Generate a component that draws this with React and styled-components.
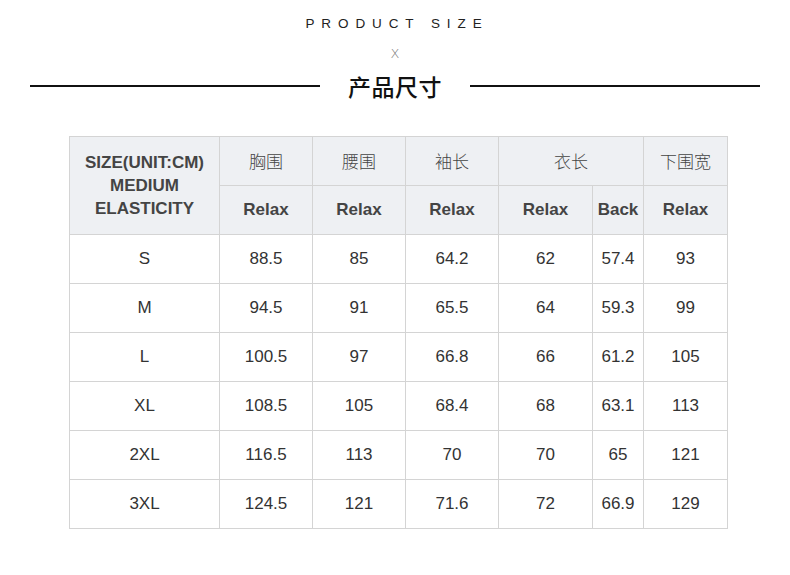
import React from 'react';
import styled, { createGlobalStyle } from 'styled-components';

const GlobalStyle = createGlobalStyle`
  html, body {
    margin: 0;
    padding: 0;
    background: #ffffff;
  }
  body {
    font-family: 'Liberation Sans', Arial, sans-serif;
  }
`;

const rows = [
  ['S', '88.5', '85', '64.2', '62', '57.4', '93'],
  ['M', '94.5', '91', '65.5', '64', '59.3', '99'],
  ['L', '100.5', '97', '66.8', '66', '61.2', '105'],
  ['XL', '108.5', '105', '68.4', '68', '63.1', '113'],
  ['2XL', '116.5', '113', '70', '70', '65', '121'],
  ['3XL', '124.5', '121', '71.6', '72', '66.9', '129'],
];

const colWidths = [150, 93, 93, 93, 94, 51, 84];

const App = () => {
  return (
    <Page>
      <GlobalStyle />
      <Heading>
        <EnTitle>PRODUCT SIZE</EnTitle>
        <Cross>X</Cross>
        <TitleRow>
          <Rule />
          <CnTitle>产品尺寸</CnTitle>
          <Rule />
        </TitleRow>
      </Heading>

      <Table>
        <colgroup>
          {colWidths.map((w, i) => (
            <col key={i} style={{ width: w }} />
          ))}
        </colgroup>
        <thead>
          <tr>
            <HeadCell rowSpan={2} $bold $tall>
              SIZE(UNIT:CM)
              <br />
              MEDIUM
              <br />
              ELASTICITY
            </HeadCell>
            <HeadCell $cn>胸围</HeadCell>
            <HeadCell $cn>腰围</HeadCell>
            <HeadCell $cn>袖长</HeadCell>
            <HeadCell $cn colSpan={2}>衣长</HeadCell>
            <HeadCell $cn>下围宽</HeadCell>
          </tr>
          <tr>
            <HeadCell $bold>Relax</HeadCell>
            <HeadCell $bold>Relax</HeadCell>
            <HeadCell $bold>Relax</HeadCell>
            <HeadCell $bold>Relax</HeadCell>
            <HeadCell $bold>Back</HeadCell>
            <HeadCell $bold>Relax</HeadCell>
          </tr>
        </thead>
        <tbody>
          {rows.map((r) => (
            <tr key={r[0]}>
              {r.map((v, i) => (
                <Cell key={i}>{v}</Cell>
              ))}
            </tr>
          ))}
        </tbody>
      </Table>
    </Page>
  );
};

const Page = styled.div`
  width: 790px;
  height: 575px;
  overflow: hidden;
  background: #fff;
`;

const Heading = styled.div`
  display: flex;
  flex-direction: column;
  align-items: center;
  padding-top: 16px;
`;

const EnTitle = styled.div`
  font-family: 'Liberation Sans', Arial, sans-serif;
  font-size: 13.5px;
  letter-spacing: 6.9px;
  margin-left: 4px;
  color: #222;
  line-height: 16px;
`;

const Cross = styled.div`
  font-family: 'DejaVu Sans', sans-serif;
  font-weight: 200;
  font-size: 13px;
  color: #777;
  margin-top: 14px;
  line-height: 16px;
`;

const TitleRow = styled.div`
  display: flex;
  align-items: center;
  width: 730px;
  gap: 28px;
  margin-top: 7px;
`;

const Rule = styled.div`
  flex: 1;
  height: 1.5px;
  background: #111;
`;

const CnTitle = styled.div`
  font-family: 'Noto Sans CJK SC', sans-serif;
  font-size: 23px;
  font-weight: 500;
  color: #111;
  letter-spacing: 0.5px;
  line-height: 34px;
`;

const Table = styled.table`
  border-collapse: collapse;
  table-layout: fixed;
  width: 658px;
  margin: 33px 0 0 69px;
  color: #333;

  td, th {
    border: 1px solid #d4d4d4;
    text-align: center;
    padding: 0;
  }
`;

const HeadCell = styled.th`
  background: #eef0f3;
  height: ${(p) => (p.$tall ? 'auto' : '48px')};
  font-family: ${(p) =>
    p.$cn
      ? "'Noto Sans CJK SC', sans-serif"
      : "'Liberation Sans', Arial, sans-serif"};
  font-size: 17px;
  font-weight: ${(p) => (p.$bold ? 700 : 300)};
  color: ${(p) => (p.$cn ? '#444' : '#444')};
  line-height: ${(p) => (p.$tall ? '23px' : '20px')};
  padding: ${(p) => (p.$tall ? '0 0 6px' : '0')};
`;

const Cell = styled.td`
  height: 48px;
  font-size: 17px;
  color: #333;
`;

export default App;
